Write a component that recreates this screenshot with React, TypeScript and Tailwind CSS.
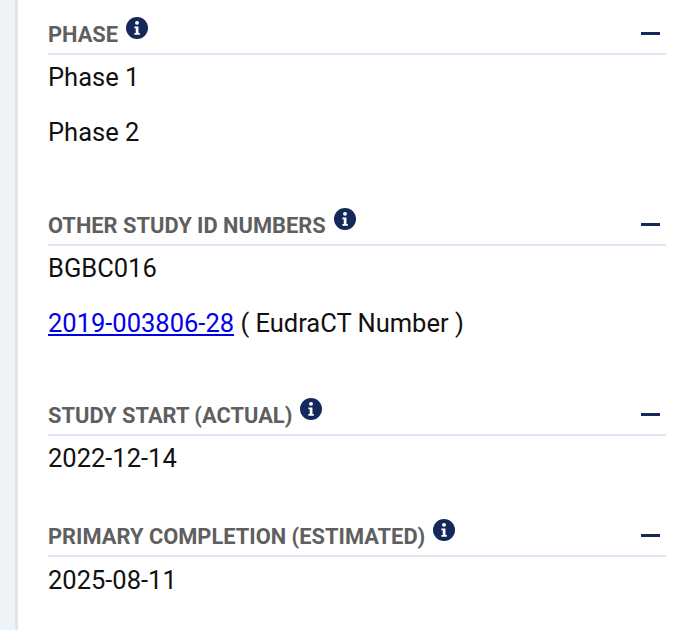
function InfoIcon() {
  return (
    <svg className="w-[22px] h-[22px] shrink-0 mb-[14px] ml-[8px]" viewBox="0 0 21 21">
      <circle cx="10.5" cy="10.5" r="10.5" fill="#14295a" />
      <circle cx="10.5" cy="5.6" r="1.9" fill="#fff" />
      <path d="M8 9h3.9v6.2h1.3V17H8v-1.8h1.3v-4.4H8z" fill="#fff" />
    </svg>
  )
}

interface SectionProps {
  title: string
  children: React.ReactNode
}

function Section({ title, children }: SectionProps) {
  return (
    <section>
      <div className="flex items-end h-[36px] border-b-2 border-[#dce7f3]">
        <h3 className="text-[21.85px] leading-[26px] font-bold text-[#5f5f5f] pb-[5px]">{title}</h3>
        <InfoIcon />
        <span className="ml-auto mr-[6px] mb-[18px] w-[19px] h-[3px] bg-[#14295a]" />
      </div>
      <div className="text-[25.5px] leading-[32px] text-[#111]">{children}</div>
    </section>
  )
}

export default function App() {
  return (
    <div className="flex w-[690px] h-[630px] overflow-hidden bg-white font-['Roboto',sans-serif]">
      <div className="w-[15px] bg-[#eff4f9] border-r-[3px] border-[#e3e5e7] box-content shrink-0" />
      <main className="flex-1 pl-[30px] pr-[24px] pt-[19px]">
        <Section title="PHASE">
          <p className="mt-[6px]">Phase 1</p>
          <p className="mt-[23px]">Phase 2</p>
        </Section>
        <div className="mt-[62px]">
          <Section title="OTHER STUDY ID NUMBERS">
            <p className="mt-[6px]">BGBC016</p>
            <p className="mt-[23px]">
              <a href="#" className="text-[#0000ee] underline">2019-003806-28</a> ( EudraCT Number )
            </p>
          </Section>
        </div>
        <div className="mt-[61px]">
          <Section title="STUDY START (ACTUAL)">
            <p className="mt-[6px]">2022-12-14</p>
          </Section>
        </div>
        <div className="mt-[47px]">
          <Section title="PRIMARY COMPLETION (ESTIMATED)">
            <p className="mt-[7px]">2025-08-11</p>
          </Section>
        </div>
      </main>
    </div>
  )
}
